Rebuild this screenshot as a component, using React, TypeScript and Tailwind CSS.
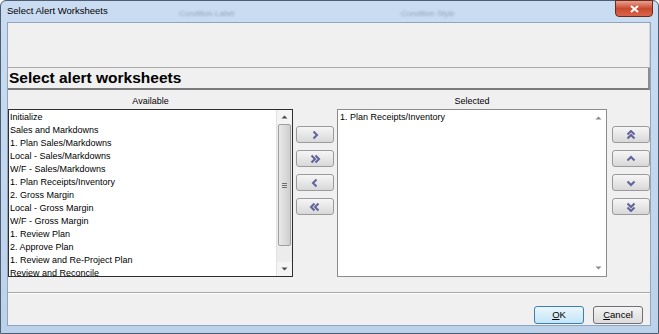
import React from 'react';

type Dir = 'left' | 'right' | 'up' | 'down';

const sans = "font-['Liberation_Sans',Arial,sans-serif]";

const available = [
  'Initialize',
  'Sales and Markdowns',
  '1. Plan Sales/Markdowns',
  'Local - Sales/Markdowns',
  'W/F - Sales/Markdowns',
  '1. Plan Receipts/Inventory',
  '2. Gross Margin',
  'Local - Gross Margin',
  'W/F - Gross Margin',
  '1. Review Plan',
  '2. Approve Plan',
  '1. Review and Re-Project Plan',
  'Review and Reconcile',
];

const selected = ['1. Plan Receipts/Inventory'];

const rotation: Record<Dir, number> = { right: 0, down: 90, left: 180, up: 270 };

const Chevron = ({ dir, double }: { dir: Dir; double?: boolean }) => (
  <svg width="12" height="10" viewBox="0 0 12 10">
    <g
      transform={`rotate(${rotation[dir]} 6 5)`}
      fill="none"
      stroke="#62629a"
      strokeWidth="2"
      strokeLinejoin="miter"
    >
      {double ? (
        <>
          <path d="M2.5 1.5 L6 5 L2.5 8.5" />
          <path d="M6.5 1.5 L10 5 L6.5 8.5" />
        </>
      ) : (
        <path d="M4.5 1.5 L8 5 L4.5 8.5" />
      )}
    </g>
  </svg>
);

const Arrow = ({ up, color = '#4a4a4a' }: { up?: boolean; color?: string }) => (
  <svg width="7" height="4" viewBox="0 0 7 4">
    <path d={up ? 'M0.5 3.5 L3.5 0.5 L6.5 3.5 Z' : 'M0.5 0.5 L3.5 3.5 L6.5 0.5 Z'} fill={color} />
  </svg>
);

const MoveButton = ({ dir, double }: { dir: Dir; double?: boolean }) => (
  <div className="h-[17px] w-[38px] rounded-[3px] border border-[#9a9a9a] bg-linear-to-b from-[#f6f6f6] to-[#d8d8d8] flex items-center justify-center">
    <Chevron dir={dir} double={double} />
  </div>
);

const DialogButton = ({ label, primary }: { label: string; primary?: boolean }) => (
  <div
    className={`h-[18px] w-[50px] rounded-[3px] border flex items-center justify-center text-[9.5px] text-black ${
      primary
        ? 'border-[#3c7fb1] bg-linear-to-b from-[#eaf6fd] to-[#c4e5f6]'
        : 'border-[#707070] bg-linear-to-b from-[#f4f4f4] to-[#dcdcdc]'
    }`}
  >
    <span className="underline underline-offset-1">{label[0]}</span>
    {label.slice(1)}
  </div>
);

export default function App() {
  return (
    <div className={`w-[659px] h-[334px] overflow-hidden bg-white ${sans}`}>
      <div className="w-full h-full rounded-t-[6px] border border-[#4d5d72] bg-linear-to-b from-[#c9dcf1] to-[#bcd2ea] flex flex-col">
        {/* title bar */}
        <div className="relative h-[21px] flex items-center pl-[6px]">
          <span className="text-[9.5px] text-black">Select Alert Worksheets</span>
          <span className="absolute left-[178px] top-[7px] text-[8px] text-[#7a8ca4] blur-[1px] opacity-70">
            Condition Label
          </span>
          <span className="absolute left-[400px] top-[7px] text-[8px] text-[#7a8ca4] blur-[1px] opacity-70">
            Condition Style
          </span>
          <div className="absolute right-[5px] -top-px w-[38px] h-[17px] rounded-b-[4px] border border-[#6b2a1e] bg-linear-to-b from-[#e6a190] via-[#c9492d] to-[#d9644a] flex items-center justify-center">
            <svg width="9" height="8" viewBox="0 0 9 8">
              <path d="M1 1 L8 7 M8 1 L1 7" stroke="#ffffff" strokeWidth="2" />
            </svg>
          </div>
        </div>

        {/* client area */}
        <div className="flex-1 flex px-[6px] pb-[7px]">
          <div className="w-[644px] h-[304px] bg-[#f0f0f0] border border-[#8fa5bf] flex flex-col box-border">
            <div className="h-[45px] border-b border-[#a8a8a8] border-r border-r-[#d4d4d4]" />
            <div className="h-[22px] border-b-2 border-[#7c7c7c] border-r-2 border-r-[#8c8c8c] flex items-center pl-[1px]">
              <span className="text-[15.5px] font-bold text-black leading-none">Select alert worksheets</span>
            </div>

            <div className="flex h-[187px]">
              {/* available */}
              <div className="w-[285px] flex flex-col">
                <div className="h-[19px] pt-[5px] text-center text-[9px] leading-[12px] text-black">Available</div>
                <div className="h-[168px] border border-[#2e2e2e] bg-white flex">
                  <div className="flex-1 pt-[1px] overflow-hidden">
                    {available.map((item) => (
                      <div key={item} className="h-[13px] leading-[13px] text-[9px] text-black pl-[1px] whitespace-nowrap">
                        {item}
                      </div>
                    ))}
                  </div>
                  <div className="w-[16px] flex flex-col bg-[#ececec] border-l border-[#e2e2e2]">
                    <div className="h-[14px] bg-[#f4f4f4] flex items-center justify-center">
                      <Arrow up />
                    </div>
                    <div className="h-[122px] mx-[1px] rounded-[2px] border border-[#a0a0a0] bg-linear-to-r from-[#e8e8e8] to-[#cfcfcf] flex items-center justify-center">
                      <div className="flex flex-col gap-[1px]">
                        <div className="w-[5px] h-px bg-[#6e6e6e]" />
                        <div className="w-[5px] h-px bg-[#6e6e6e]" />
                        <div className="w-[5px] h-px bg-[#6e6e6e]" />
                      </div>
                    </div>
                    <div className="flex-1" />
                    <div className="h-[14px] bg-[#f4f4f4] flex items-center justify-center">
                      <Arrow />
                    </div>
                  </div>
                </div>
              </div>

              {/* add / remove */}
              <div className="ml-[3px] w-[38px] pt-[36px] flex flex-col gap-[7px]">
                <MoveButton dir="right" />
                <MoveButton dir="right" double />
                <MoveButton dir="left" />
                <MoveButton dir="left" double />
              </div>

              {/* selected */}
              <div className="ml-[3px] w-[270px] flex flex-col">
                <div className="h-[19px] pt-[5px] text-center text-[9px] leading-[12px] text-black">Selected</div>
                <div className="h-[168px] border border-[#8c8c8c] bg-white flex">
                  <div className="flex-1 pt-[1px] pl-[1px] overflow-hidden">
                    {selected.map((item) => (
                      <div key={item} className="h-[13px] leading-[13px] text-[9px] text-black pl-[1px] whitespace-nowrap">
                        {item}
                      </div>
                    ))}
                  </div>
                  <div className="w-[16px] flex flex-col justify-between py-[6px] items-center">
                    <Arrow up color="#8a8a8a" />
                    <Arrow color="#8a8a8a" />
                  </div>
                </div>
              </div>

              {/* order */}
              <div className="ml-[5px] w-[38px] pt-[36px] flex flex-col gap-[7px]">
                <MoveButton dir="up" double />
                <MoveButton dir="up" />
                <MoveButton dir="down" />
                <MoveButton dir="down" double />
              </div>
            </div>

            <div className="mt-[15px] h-[2px] border-t border-[#a8a8a8] border-b border-b-white" />

            <div className="pt-[12px] pr-[7px] flex justify-end gap-[9px]">
              <DialogButton label="OK" primary />
              <DialogButton label="Cancel" />
            </div>
          </div>
        </div>
      </div>
    </div>
  );
}
